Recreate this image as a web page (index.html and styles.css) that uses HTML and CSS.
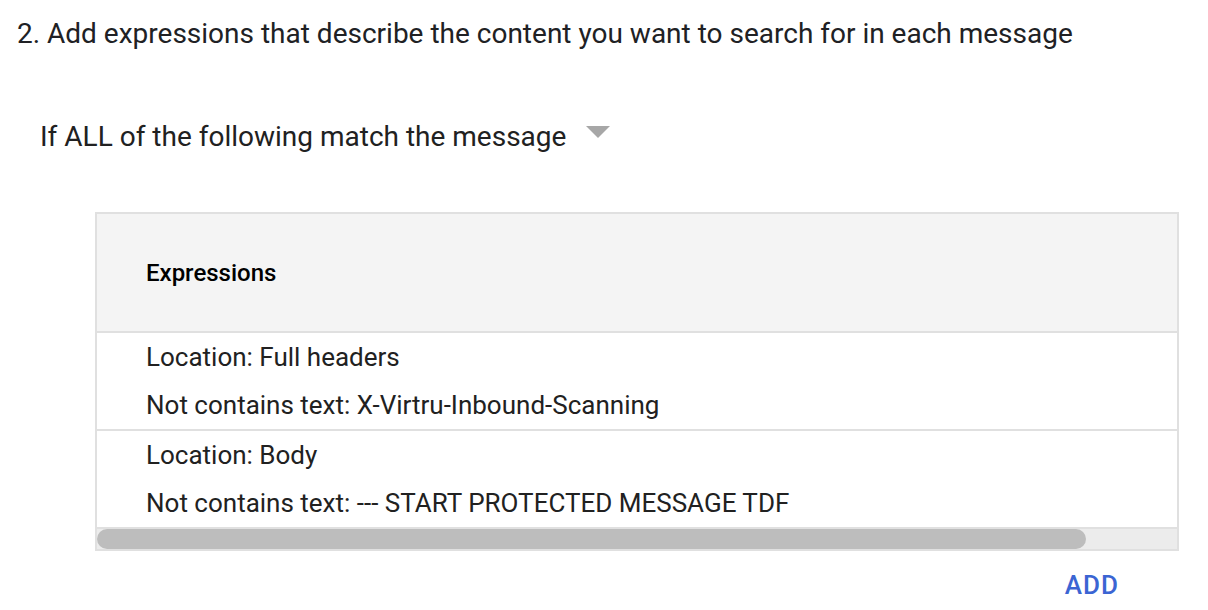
FILE: index.html
```html
<!DOCTYPE html>
<html lang="en">
<head>
<meta charset="utf-8">
<title>Expressions</title>
<link rel="stylesheet" href="styles.css">
</head>
<body>
<div class="page">
  <h2 class="step-title">2. Add expressions that describe the content you want to search for in each message</h2>
  <div class="condition">
    <span class="condition-label">If ALL of the following match the message</span>
    <span class="dropdown-arrow" aria-hidden="true"></span>
  </div>
  <div class="expr-block">
    <div class="expr-table">
      <div class="expr-header">Expressions</div>
      <div class="expr-row">
        <div class="expr-line">Location: Full headers</div>
        <div class="expr-line">Not contains text: X-Virtru-Inbound-Scanning</div>
      </div>
      <div class="expr-row">
        <div class="expr-line">Location: Body</div>
        <div class="expr-line">Not contains text: --- START PROTECTED MESSAGE TDF</div>
      </div>
      <div class="scrollbar"><div class="scroll-thumb"></div></div>
    </div>
    <div class="actions">
      <button class="add-btn" type="button">ADD</button>
    </div>
  </div>
</div>
</body>
</html>
```
FILE: styles.css
```css
html, body {
  margin: 0;
  padding: 0;
  background: #ffffff;
}
body {
  font-family: Roboto, "Liberation Sans", Arial, sans-serif;
  color: #212121;
}
.page {
  padding: 14px 0 0 0;
}
.step-title {
  margin: 0;
  padding-left: 17px;
  font-size: 28px;
  font-weight: 400;
  line-height: 40px;
  color: #202124;
}
.condition {
  display: flex;
  align-items: flex-start;
  margin-top: 63px;
  padding-left: 40px;
  height: 40px;
}
.condition-label {
  font-size: 28px;
  line-height: 40px;
  color: #212121;
}
.dropdown-arrow {
  width: 0;
  height: 0;
  margin-left: 20px;
  margin-top: 9px;
  border-left: 12px solid transparent;
  border-right: 12px solid transparent;
  border-top: 12px solid #a7a7a7;
}
.expr-block {
  margin-top: 55px;
  margin-left: 95px;
  width: 1084px;
}
.expr-table {
  border: 2px solid #e0e0e0;
  background: #ffffff;
}
.expr-header {
  height: 117px;
  display: flex;
  align-items: center;
  padding-left: 49px;
  background: #f4f4f4;
  border-bottom: 2px solid #e0e0e0;
  font-size: 24px;
  font-weight: 500;
  color: #000000;
}
.expr-row {
  padding-left: 49px;
  border-bottom: 2px solid #e0e0e0;
}
.expr-row:last-of-type {
  border-bottom: none;
}
.expr-line {
  font-size: 26px;
  line-height: 48px;
  color: #212121;
}
.scrollbar {
  height: 20px;
  background: #ececec;
}
.scroll-thumb {
  width: 989px;
  height: 20px;
  border-radius: 10px;
  background: #bdbdbd;
}
.actions {
  display: flex;
  justify-content: flex-end;
  padding-right: 60px;
  margin-top: 18px;
}
.add-btn {
  border: none;
  background: transparent;
  padding: 0;
  font-family: Roboto, "Liberation Sans", Arial, sans-serif;
  font-size: 26px;
  font-weight: 500;
  letter-spacing: 1px;
  line-height: 32px;
  color: #3b65d3;
  cursor: pointer;
}
```
